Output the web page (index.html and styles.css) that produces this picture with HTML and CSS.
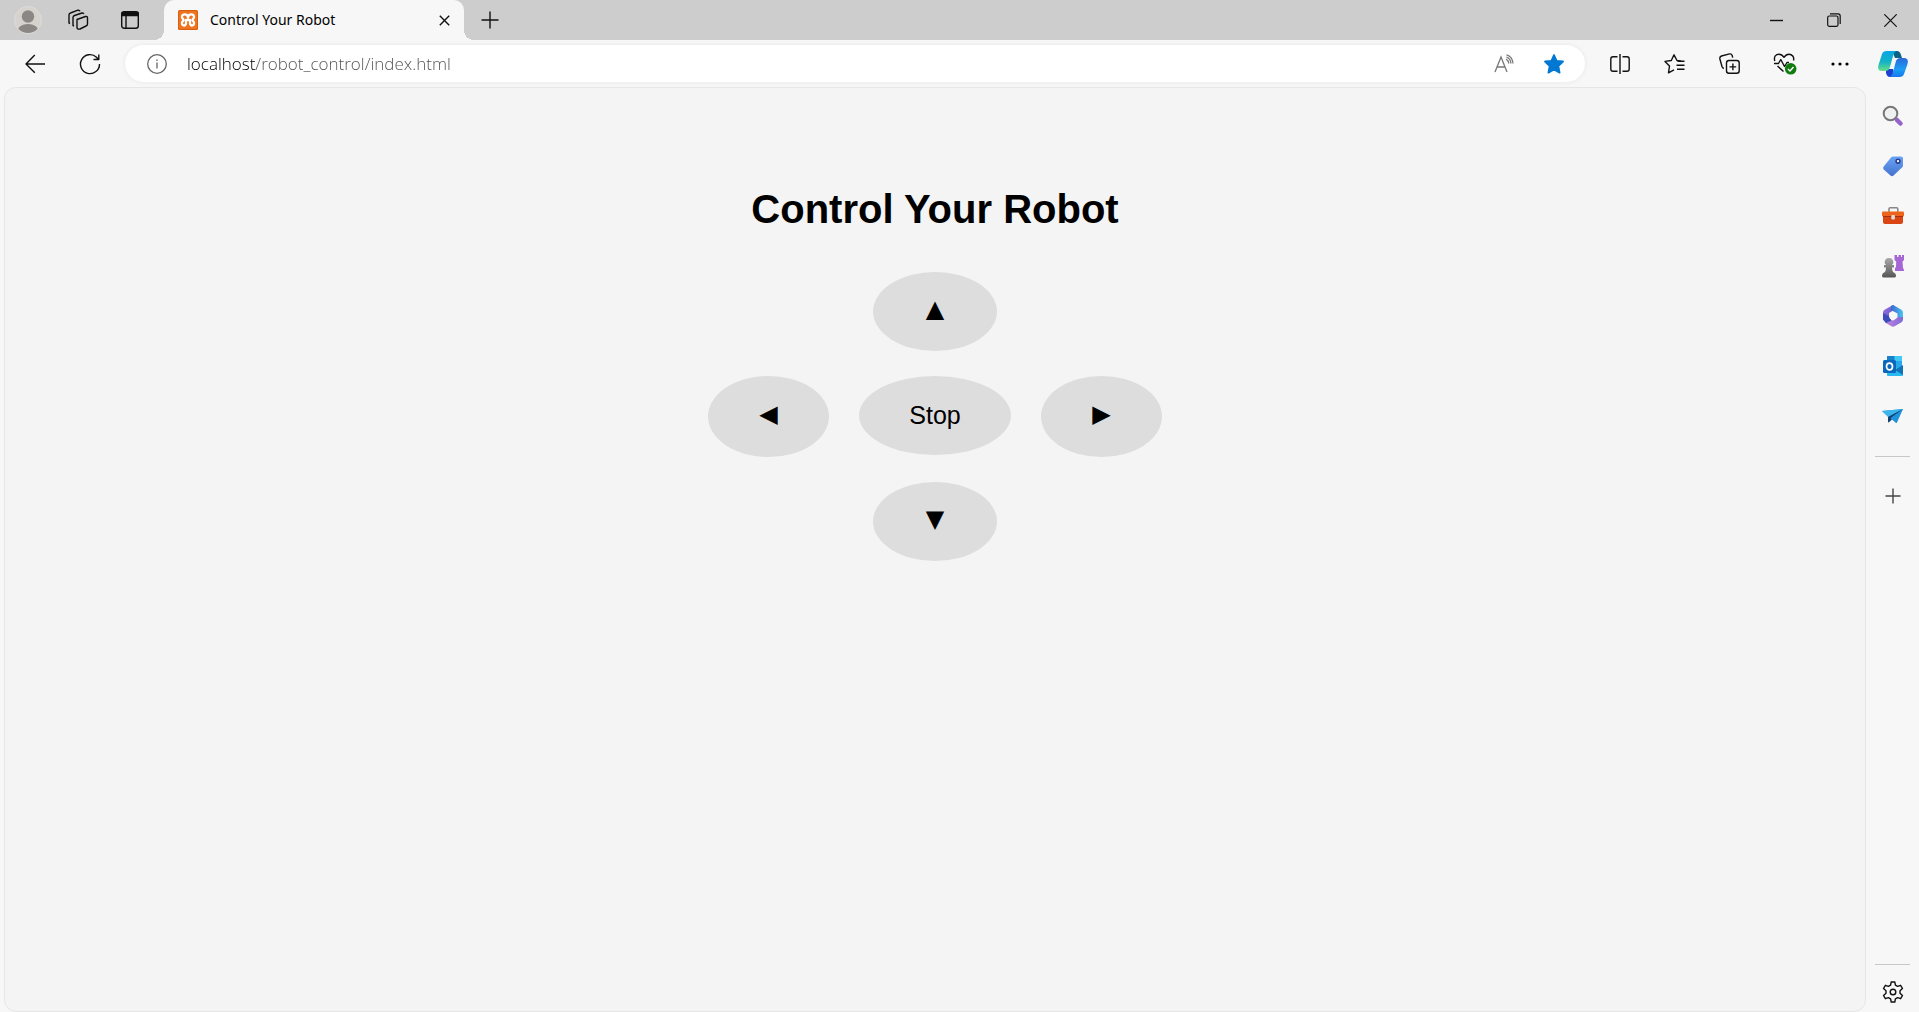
FILE: index.html
```html
<!DOCTYPE html>
<html lang="en">
<head>
<meta charset="utf-8">
<title>Control Your Robot</title>
<link rel="stylesheet" href="styles.css">
</head>
<body>
<header class="titlebar">
  <button class="title-btn" aria-label="Profile">
    <svg width="28" height="28" viewBox="0 0 28 28"><defs><clipPath id="face"><circle cx="14" cy="14" r="13"/></clipPath></defs><circle cx="14" cy="14" r="13.5" fill="#d6d3cf" stroke="#dedcd8"/><g clip-path="url(#face)" fill="#8b8784"><circle cx="14" cy="10.500" r="6.200"/><ellipse cx="14" cy="25" rx="10.500" ry="7"/></g></svg>
  </button>
  <button class="title-btn" aria-label="Workspaces">
    <svg class="line" width="22" height="22" viewBox="0 0 22 22"><path d="M9 10.500 17.500 7.500Q19.500 7 19.500 9V15Q19.500 16.500 18 17L12 20Q9 20.500 9 18.500ZM6 17 5 16.500V8.500Q5 7 6.500 6.500L14 4Q15.500 3.700 15.800 5M2 14.500 1 14V6Q1 4.500 2.500 4L10 1.200Q11.500 1 12 2.300"/></svg>
  </button>
  <button class="title-btn" aria-label="Tab actions">
    <svg class="line" width="20" height="20" viewBox="0 0 20 20"><rect x="1.700" y="1.700" width="16.600" height="16.600" rx="2.500"/><path d="M2 2.500H18V5.500H2Z" fill="#111"/><path d="M6 5V18"/></svg>
  </button>
  <div class="tab">
    <svg width="20" height="20" viewBox="0 0 20 20"><rect width="20" height="20" rx="1.500" fill="#d95f10"/><rect x="1" y="1" width="18" height="18" rx="1" fill="#ee7420"/><path d="M10 7.500C9.500 3.300 3.500 3.600 4 7.300 4.200 8.800 5.600 9 5.600 10 5.600 11 4.200 11.200 4 12.700 3.500 16.400 8.500 16.500 8 12.500V10H12V12.500C11.500 16.500 16.500 16.400 16 12.700 15.800 11.200 14.400 11 14.400 10 14.400 9 15.800 8.800 16 7.300 16.500 3.600 10.500 3.300 10 7.500Z" fill="none" stroke="#fff" stroke-width="2.300" stroke-linejoin="round"/></svg>
    <span class="tab-title">Control Your Robot</span>
    <button class="tab-close" aria-label="Close tab"><svg class="line" width="11" height="11" viewBox="0 0 11 11"><path d="M.8.8 10.200 10.200M10.200.8.8 10.200"/></svg></button>
  </div>
  <button class="title-btn" aria-label="New tab"><svg class="line" width="18" height="18" viewBox="0 0 18 18"><path d="M9 .5V17.500M.5 9H17.500"/></svg></button>
  <div class="window-controls">
    <button class="window-btn" aria-label="Minimize"><svg class="line" width="13" height="13" viewBox="0 0 13 13"><path d="M0 6.500H13"/></svg></button>
    <button class="window-btn" aria-label="Restore"><svg class="line thin" width="14" height="14" viewBox="0 0 14 14"><rect x=".7" y="3" width="10.300" height="10.300" rx="1.500"/><path d="M3 .8H11Q13.200.8 13.200 3V11"/></svg></button>
    <button class="window-btn" aria-label="Close"><svg class="line thin" width="13" height="13" viewBox="0 0 13 13"><path d="M.3.3 12.700 12.700M12.700.3.3 12.700"/></svg></button>
  </div>
</header>

<nav class="toolbar" aria-label="Browser toolbar">
  <button class="tool-btn" aria-label="Back"><svg class="line" width="20" height="20" viewBox="0 0 20 20"><path d="M20 10H1M9.800 1 1 10 9.800 18.800"/></svg></button>
  <button class="tool-btn" aria-label="Refresh"><svg class="line" width="22" height="22" viewBox="0 0 22 22"><path d="M20.500 11A9.500 9.500 0 1 1 17.500 4.200L19.500 6.500M19.800 1.500V6.500H14.500"/></svg></button>
  <div class="address">
    <svg class="info" width="20" height="20" viewBox="0 0 20 20"><circle cx="10" cy="10" r="9.300"/><path d="M10 8.500V14.500M10 5.500V7"/></svg>
    <input class="url" type="text" aria-label="Address" value="localhost/robot_control/index.html">
    <button class="address-btn" aria-label="Read aloud"><svg class="read" width="20" height="20" viewBox="0 0 20 20"><path d="M1 18 7 3 13 18M3 13H11M12 5Q14.500 6.500 14.800 9.500M12.500 3Q16.500 4.500 17 9.500M12.500.8Q18.500 2.500 19 9.500"/></svg></button>
    <button class="address-btn" aria-label="Edit favorite"><svg width="22" height="22" viewBox="0 0 22 22"><path d="M11 2 13.600 7.800 20 8.500 15.300 13 16.600 19.600 11 16.400 5.400 19.600 6.700 13 2 8.500 8.400 7.800Z" fill="#0078d4" stroke="#0078d4" stroke-width="1.800" stroke-linejoin="round"/></svg></button>
  </div>
  <button class="tool-btn" aria-label="Split screen"><svg class="line" width="20" height="20" viewBox="0 0 20 20"><path d="M7.500 2.800H3Q.8 2.800.8 5V15Q.8 17.200 3 17.200H7.500M12.500 2.800H17Q19.200 2.800 19.200 5V15Q19.200 17.200 17 17.200H12.500M10 0V20"/></svg></button>
  <button class="tool-btn" aria-label="Favorites"><svg class="line" width="21" height="20" viewBox="0 0 21 20"><path d="M17 7 13 6.500 10 .8 7.300 6.500 1 7.400 5.500 12 4.500 18.800 10 15.800M13.500 7.300H20.500M12.500 11.300H20.500M13 15.300H20.500"/></svg></button>
  <button class="tool-btn" aria-label="Collections"><svg class="line" width="21" height="21" viewBox="0 0 21 21"><rect x="7.500" y="7.500" width="12.700" height="12.700" rx="2.500"/><path d="M13.900 10.500V17.200M10.500 13.900H17.200M4.800 15.500Q3.500 15 3 13.500L.9 6Q.4 3.800 2.500 3L10.500.9Q12.500.6 13.200 2.500L13.700 4.700"/></svg></button>
  <button class="tool-btn" aria-label="Browser essentials"><svg class="line" width="24" height="22" viewBox="0 0 24 22"><path d="M1.800 8C.5 3.500 3 1.200 6 1.200 8.500 1.200 10 2.800 11 4.300 12 2.800 13.500 1.200 16 1.200 19 1.200 21.500 4 20.500 7.500M1 10.500H5.500L7.800 6.500 11.500 13.500 14 9.500H16M4.500 13 10.500 18.500"/><circle cx="17.700" cy="15.800" r="5.800" fill="#107c10" stroke="none"/><path d="M15 16 17 18 20.500 14" stroke="#fff"/></svg></button>
  <button class="tool-btn" aria-label="Settings and more"><svg width="18" height="4" viewBox="0 0 18 4"><circle cx="2" cy="2" r="1.600"/><circle cx="9" cy="2" r="1.600"/><circle cx="16" cy="2" r="1.600"/></svg></button>
  <button class="side-btn" aria-label="Copilot">
    <svg width="30" height="28" viewBox="0 0 30 28"><defs><linearGradient id="cpA" x2="0" y2="1"><stop stop-color="#0aa5e8"/><stop offset=".55" stop-color="#14b3c3"/><stop offset="1" stop-color="#67e08a"/></linearGradient><linearGradient id="cpB" x2="0" y2="1"><stop stop-color="#2b68d9"/><stop offset=".6" stop-color="#1b9df5"/><stop offset="1" stop-color="#1678ee"/></linearGradient></defs><path d="M14 1H19Q22 1 23 5L24 8H17Z" fill="#0c6385"/><path d="M8 19H15L17 27H12Q9 27 8 23Z" fill="#1b40d2"/><path d="M8.500 1H18Q16 2 15 6L12 17Q11 21 7 21H4Q-1 21 .5 15L4 4Q5 1 8.500 1Z" fill="url(#cpA)"/><path d="M26 8Q31 8 29.500 14L26 24Q25 27 21.500 27H12Q14 26 15 22L18 11Q19 8 23 8Z" fill="url(#cpB)"/></svg>
  </button>
</nav>

<div class="workspace">
  <main class="page">
    <h1 class="heading">Control Your Robot</h1>
    <div class="pad">
      <button class="pad-btn arrow up" aria-label="Forward">▲</button>
      <button class="pad-btn arrow left" aria-label="Left">◀</button>
      <button class="pad-btn stop">Stop</button>
      <button class="pad-btn arrow right" aria-label="Right">▶</button>
      <button class="pad-btn arrow down" aria-label="Backward">▼</button>
    </div>
  </main>
  <aside class="sidebar" aria-label="Sidebar">
    <button class="side-btn" aria-label="Search"><svg width="22" height="22" viewBox="0 0 22 22"><circle cx="8.500" cy="8.500" r="6.800" fill="#eef0f2" stroke="#777" stroke-width="2"/><path d="M15 15 18.500 18.500" stroke="#9563c9" stroke-width="4.500" stroke-linecap="round"/></svg></button>
    <button class="side-btn" aria-label="Shopping"><svg width="22" height="22" viewBox="0 0 22 22"><defs><linearGradient id="tag" x2="0" y2="1"><stop stop-color="#6aa3f5"/><stop offset="1" stop-color="#4472cf"/></linearGradient></defs><path d="M11 1.500H19Q21 1.500 21 3.500V10.500Q21 11.500 20 12.500L11.500 20.500Q10 22 8.500 20.500L1.700 14.500Q.5 13 1.700 11.500L9 2.500Q10 1.500 11 1.500Z" fill="url(#tag)"/><circle cx="16" cy="6.200" r="1.900" fill="#fff" stroke="#293f91" stroke-width="1.600"/></svg></button>
    <button class="side-btn" aria-label="Tools"><svg width="22" height="20" viewBox="0 0 22 20"><path d="M7 6V3Q7 1.800 8.200 1.800H14.500Q15.800 1.800 15.800 3V6" fill="none" stroke="#888" stroke-width="1.600"/><path d="M1 10H21V16Q21 18 19 18H3Q1 18 1 16Z" fill="#d94513"/><rect y="5.500" width="22" height="5" rx="1" fill="#ee641c"/><path d="M1 10.500H21" stroke="#a92f0a"/><rect x="9.300" y="9" width="3.600" height="4.500" rx="1" fill="#ddd"/></svg></button>
    <button class="side-btn" aria-label="Games"><svg width="22" height="24" viewBox="0 0 22 24"><defs><linearGradient id="pawn" x2="0" y2="1"><stop stop-color="#aaa"/><stop offset="1" stop-color="#555"/></linearGradient></defs><path d="M12.500 1H15V3H16.500V1H19V3H20V1H22V6L20.500 7.500 21 14Q22 14.500 22 17H13V14L14 13 14.200 7.500 12.500 6Z" fill="#a567d6"/><path d="M7 4A4 4 0 0 1 10 11H12V13.500H10Q10 16 11 18 14 19 14 22Q14 23.500 12 23.500H2Q0 23.500 0 22 0 19 3 18 4 16 4 13.500H2V11H4A4 4 0 0 1 7 4Z" fill="url(#pawn)"/></svg></button>
    <button class="side-btn" aria-label="Microsoft 365"><svg width="22" height="22" viewBox="0 0 22 22"><defs><linearGradient id="mA" y2="1"><stop stop-color="#a96fe0"/><stop offset="1" stop-color="#4656c4"/></linearGradient><linearGradient id="mB"><stop stop-color="#3a68cf"/><stop offset="1" stop-color="#4cc4f2"/></linearGradient><linearGradient id="mC"><stop stop-color="#c583dc"/><stop offset="1" stop-color="#7d6ad8"/></linearGradient></defs><path d="M11 0 3 4.500Q1 5.500 1 7.500V14.500L4 17.500 8.500 15 7 12V8L12 5V0Z" fill="url(#mA)"/><path d="M9 1Q11-.3 13 1L19.500 4.800Q21 5.800 21 7.500V13L15.500 12V8.500L9 5Z" fill="url(#mB)"/><path d="M21 12V14.500Q21 16.300 19.500 17.200L13 21Q11 22.300 9 21L3 17.500 8 15 11 15.500 16 12Z" fill="url(#mC)"/><path d="M1 14.500V8L7.500 11.500 9.500 15.500 4 18Z" fill="#3c4dbb"/><circle cx="11" cy="11" r="3.800" fill="#f7f7f7"/></svg></button>
    <button class="side-btn" aria-label="Outlook"><svg width="22" height="22" viewBox="0 0 22 22"><rect x="5" y="1" width="15" height="14" rx="1" fill="#28a8ea"/><path d="M5 2Q5 1 6 1H12V6H5Z" fill="#1683c8"/><path d="M13 1H19Q20 1 20 2V6H13Z" fill="#42c8f5"/><path d="M5 12H14L21 17V20Q21 21 20 21H6Q5 21 5 20Z" fill="#29b8f0"/><path d="M21 10V20L13 15Z" fill="#1272b5"/><rect x="1" y="5" width="13" height="13" rx="1.500" fill="#0868bd"/><ellipse cx="7.500" cy="11.500" rx="3" ry="3.400" fill="none" stroke="#fff" stroke-width="1.700"/></svg></button>
    <button class="side-btn" aria-label="Drop"><svg width="22" height="20" viewBox="0 0 22 20"><path d="M0 5 21 3 15 16.500Q14.500 17.500 13.500 16.500L7 11Z" fill="#1f93dc"/><path d="M0 5 21 3 6 11Z" fill="#3cb5ec"/><path d="M21 3 6 11V15.500Q6 17 7.200 16L10 13.500 8.500 12Z" fill="#103f72"/></svg></button>
    <hr class="rule">
    <button class="side-btn add" aria-label="Customize sidebar"><svg class="line soft" width="16" height="16" viewBox="0 0 16 16"><path d="M8 .5V15.500M.5 8H15.500"/></svg></button>
    <hr class="rule bottom">
    <button class="side-btn gear" aria-label="Settings"><svg class="line" width="22" height="22" viewBox="0 0 22 22"><circle cx="11" cy="11" r="2.800"/><path d="M9.200 1H12.800L13.400 4.200 15.600 5.400 18.600 4.300 20.500 7.500 18 9.700V12.300L20.500 14.500 18.600 17.700 15.600 16.600 13.400 17.800 12.800 21H9.200L8.600 17.800 6.400 16.600 3.400 17.700 1.500 14.500 4 12.300V9.700L1.500 7.500 3.400 4.300 6.400 5.400 8.600 4.200Z"/></svg></button>
  </aside>
</div>
</body>
</html>
```
FILE: styles.css
```css
* { box-sizing: border-box; }

body {
  margin: 0;
  min-height: 100vh;
  display: flex;
  flex-direction: column;
  background: #f7f7f7;
  font-family: "Noto Sans", "Open Sans", sans-serif;
  color: #000;
}

button {
  display: flex;
  align-items: center;
  justify-content: center;
  flex: none;
  padding: 0;
  border: 0;
  background: transparent;
  color: inherit;
}

svg { display: block; flex: none; }

.line {
  fill: none;
  stroke: #111;
  stroke-width: 1.4;
  stroke-linejoin: round;
}
.line.thin { stroke-width: 1.2; }
.line.soft { stroke: #444; }

/* Title bar */
.titlebar {
  display: flex;
  height: 40px;
  padding-left: 2px;
  background: #cdcdcd;
}
.title-btn { width: 51px; }

.tab {
  position: relative;
  display: flex;
  align-items: center;
  width: 300px;
  margin-left: 9px;
  padding: 0 6px 0 14px;
  gap: 12px;
  border-radius: 10px 10px 0 0;
  background: #f7f7f7;
}
.tab::before,
.tab::after {
  content: "";
  position: absolute;
  bottom: 0;
  width: 10px;
  height: 10px;
}
.tab::before {
  left: -10px;
  background: radial-gradient(circle at 0 0, #cdcdcd 10px, #f7f7f7 10px);
}
.tab::after {
  right: -10px;
  background: radial-gradient(circle at 100% 0, #cdcdcd 10px, #f7f7f7 10px);
}
.tab-title { flex: 1; font-size: 14px; line-height: 20px; }
.tab-close { width: 28px; height: 28px; }

.window-controls { display: flex; margin-left: auto; }
.window-btn { width: 57px; }

/* Toolbar */
.toolbar {
  display: flex;
  align-items: center;
  height: 47px;
  padding-left: 7px;
}
.tool-btn { width: 55px; height: 40px; }

.address {
  flex: 1;
  display: flex;
  align-items: center;
  height: 37px;
  margin: 0 7px 0 8px;
  padding: 0 6px 0 22px;
  border-radius: 19px;
  background: #fff;
  box-shadow: 0 0 5px rgba(0, 0, 0, .07);
}
.info { fill: none; stroke: #666; stroke-width: 1.3; }
.url {
  flex: 1;
  min-width: 0;
  margin-left: 20px;
  padding: 0;
  border: 0;
  outline: 0;
  font: 300 17px/24px "Open Sans", "Noto Sans", sans-serif;
  color: transparent;
  /* the host is dark, the path after it is grey */
  background: linear-gradient(to right, #000 69px, #505050 69px);
  background-clip: text;
  -webkit-background-clip: text;
}
.address-btn { width: 50px; height: 36px; }
.read { fill: none; stroke: #777; stroke-width: 1.3; }

/* Page and sidebar */
.workspace { flex: 1; display: flex; }

.page {
  flex: 1;
  margin-left: 4px;
  padding: 98px 20px 40px;
  border: 1px solid #e6e6e6;
  border-radius: 12px;
  background: #f4f4f4;
  font-family: "Liberation Sans", Arial, sans-serif;
}
.heading {
  margin: 0 0 40px;
  font-size: 40px;
  line-height: 46px;
  text-align: center;
}
.pad {
  display: grid;
  grid-template-columns: auto auto auto;
  grid-template-areas: ". up ." "left stop right" ". down .";
  justify-content: center;
  justify-items: center;
  align-items: start;
  gap: 25px 30px;
}
.pad-btn {
  width: 124px;
  height: 79px;
  border-radius: 50%;
  background: #ddd;
  font: 25px/29px "Liberation Sans", Arial, sans-serif;
}
.pad-btn.arrow {
  padding-bottom: 4px;
  font-family: "DejaVu Sans", sans-serif;
  font-size: 24px;
}
.up { grid-area: up; }
.down { grid-area: down; }
.stop { grid-area: stop; width: 152px; }
.left, .right { width: 121px; height: 81px; }
.left { grid-area: left; }
.right { grid-area: right; }

.sidebar {
  display: flex;
  flex-direction: column;
  align-items: center;
  width: 53px;
  padding-top: 4px;
}
.side-btn { width: 52px; height: 50px; }
.rule {
  width: 35px;
  height: 1px;
  margin: 15px 0 0;
  border: 0;
  background: #c8c8c8;
}
.add { margin-top: 14px; }
.rule.bottom { margin-top: auto; }
.gear { height: 40px; margin-top: 7px; }
```
